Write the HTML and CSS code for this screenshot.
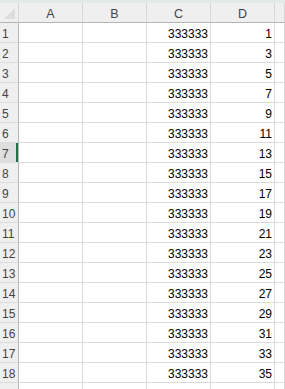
FILE: index.html
```html
<html>
<head>
<title>sheet</title>
<meta charset="utf-8" />
<link rel="stylesheet" href="styles.css">
</head>
<body>

<div class="ribbon"></div>

<div class="sheet">
<div class="row head">
<div class="corner"></div><div class="col">A</div><div class="col">B</div><div class="col">C</div><div class="col">D</div><div class="col"></div>
</div>
<div class="row"><div class="num">1</div><div></div><div></div><div class="val">333333</div><div class="val">1</div><div></div></div>
<div class="row"><div class="num">2</div><div></div><div></div><div class="val">333333</div><div class="val">3</div><div></div></div>
<div class="row"><div class="num">3</div><div></div><div></div><div class="val">333333</div><div class="val">5</div><div></div></div>
<div class="row"><div class="num">4</div><div></div><div></div><div class="val">333333</div><div class="val">7</div><div></div></div>
<div class="row"><div class="num">5</div><div></div><div></div><div class="val">333333</div><div class="val">9</div><div></div></div>
<div class="row"><div class="num">6</div><div></div><div></div><div class="val">333333</div><div class="val">11</div><div></div></div>
<div class="row"><div class="num selected">7</div><div></div><div></div><div class="val">333333</div><div class="val">13</div><div></div></div>
<div class="row"><div class="num">8</div><div></div><div></div><div class="val">333333</div><div class="val">15</div><div></div></div>
<div class="row"><div class="num">9</div><div></div><div></div><div class="val">333333</div><div class="val">17</div><div></div></div>
<div class="row"><div class="num">10</div><div></div><div></div><div class="val">333333</div><div class="val">19</div><div></div></div>
<div class="row"><div class="num">11</div><div></div><div></div><div class="val">333333</div><div class="val">21</div><div></div></div>
<div class="row"><div class="num">12</div><div></div><div></div><div class="val">333333</div><div class="val">23</div><div></div></div>
<div class="row"><div class="num">13</div><div></div><div></div><div class="val">333333</div><div class="val">25</div><div></div></div>
<div class="row"><div class="num">14</div><div></div><div></div><div class="val">333333</div><div class="val">27</div><div></div></div>
<div class="row"><div class="num">15</div><div></div><div></div><div class="val">333333</div><div class="val">29</div><div></div></div>
<div class="row"><div class="num">16</div><div></div><div></div><div class="val">333333</div><div class="val">31</div><div></div></div>
<div class="row"><div class="num">17</div><div></div><div></div><div class="val">333333</div><div class="val">33</div><div></div></div>
<div class="row"><div class="num">18</div><div></div><div></div><div class="val">333333</div><div class="val">35</div><div></div></div>
<div class="row"><div class="num"></div><div></div><div></div><div></div><div></div><div></div></div>
</div>

</body>
</html>
```

FILE: styles.css
```css
body {
    margin: 0;
    background-color: #fff;
    font-family: "Liberation Sans", Arial, sans-serif;
    font-size: 12px;
    color: #000;
    overflow: hidden;
}

.ribbon {
    height: 3px;
    background-color: #e1e9e9;
}

.row {
    display: grid;
    grid-template-columns: 19px 64px 64px 64px 64px 1fr;
    height: 20px;
}

.row > div {
    box-sizing: border-box;
    border-right: 1px solid #dadada;
    border-bottom: 1px solid #dadada;
    padding-top: 3px;
    line-height: 16px;
    white-space: nowrap;
    overflow: hidden;
}

.head > div {
    background-color: #efefef;
    border-right-color: #d6d6d6;
    border-bottom-color: #b4b4b4;
    text-align: center;
    color: #444;
    font-size: 12.5px;
}

.corner {
    position: relative;
}

.corner::after {
    content: "";
    position: absolute;
    right: 3px;
    bottom: 3px;
    border-style: solid;
    border-width: 0 0 11px 11px;
    border-color: transparent transparent #dcdcdc transparent;
}

.row > .num {
    background-color: #efefef;
    border-right-color: #b8b8b8;
    border-bottom-color: #dcdcdc;
    color: #444;
    padding-left: 2px;
}

.row > .selected {
    background-color: #dedede;
    box-shadow: inset -2px 0 0 #217346;
}

.val {
    text-align: right;
    padding-right: 2px;
}
```
